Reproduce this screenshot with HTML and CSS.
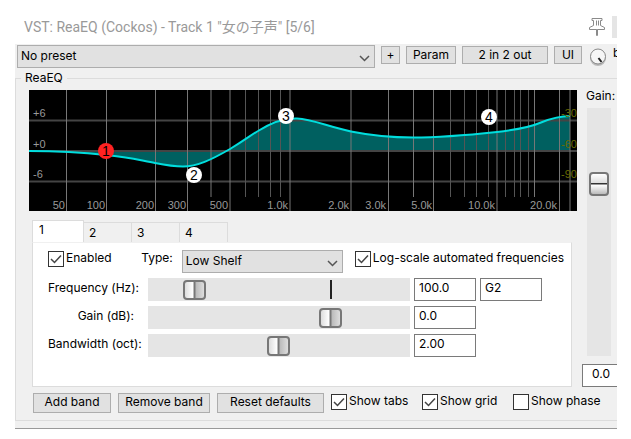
FILE: index.html
```html
<!DOCTYPE html>
<html lang="en">
<head>
    <meta charset="UTF-8">
    <meta name="viewport" content="width=device-width, initial-scale=1.0">
    <title>VST: ReaEQ</title>
    <link rel="stylesheet" href="styles.css">
</head>
<body>
    <div class="window">
        <header class="titlebar">
            <h1 class="title">VST: ReaEQ (Cockos) - Track 1 "女の子声" [5/6]</h1>
            <svg class="pin" width="18" height="20" viewBox="0 0 18 20" fill="#fff" stroke="#8a8a8a">
                <path d="M4 1.500H14V3.500H12.500V8.500L16.500 10.500V12.500H1.500V10.500L5.500 8.500V3.500H4Z"/>
                <path d="M8.500 12.500V18.500H9.500V12.500M8.500 3.500V8.500M10.500 3.500V8.500"/>
            </svg>
            <span class="title-edge"></span>
        </header>

        <div class="toolbar">
            <select class="select preset" aria-label="Preset">
                <option>No preset</option>
            </select>
            <button class="btn btn-plus" type="button">+</button>
            <button class="btn btn-param" type="button">Param</button>
            <button class="btn btn-io" type="button">2 in 2 out</button>
            <button class="btn btn-ui" type="button">UI</button>
            <svg class="knob" width="18" height="20" viewBox="0 0 18 20">
                <circle cx="9" cy="11" r="8" fill="#bbb"/>
                <circle cx="9" cy="9.500" r="7.500" fill="#f6f6f6" stroke="#888"/>
                <path d="M9.500 11L12.500 15" stroke="#222" stroke-width="2"/>
            </svg>
            <span class="bypass">b</span>
        </div>

        <fieldset class="group">
            <legend>ReaEQ</legend>
            <div class="editor">
                <svg class="graph" viewBox="0 0 548 121">
                    <rect width="548" height="121" fill="#000"/>
                    <path class="fill" d="M0 61C25 61 50 62 77 65C100 67 112 70.500 126 73C136 75 145 76.500 154 76.500C168 76.500 182 70 201 59C216 50 222 45 229 41C240 34 252 28 268 28.500C283 29 300 37 322 41.500C342 45.500 362 47.500 384 47.500C405 47.500 440 45 468 42C490 39.500 505 35.500 512 32.500C522 28.500 530 26 541 26V61Z"/>
                    <g class="grid">
                        <path d="M0 30.500H548M0 61H548M0 91.500H548"/>
                        <path class="short" d="M216.500 0V107M229.500 0V107M241.500 0V107M251.500 0V107M421.500 0V107M435.500 0V107M447.500 0V107M459.500 0V107M476.500 0V107M485.500 0V107M491.500 0V107M499.500 0V107"/>
                        <path class="major" d="M182 0V107M384.500 0V107M505.500 0V107M37.500 0V121M77.500 0V121M126.500 0V121M158.500 0V121M201 0V121M261 0V121M322 0V121M359.500 0V121M404.500 0V121M468 0V121M530.500 0V121M541 0V121"/>
                    </g>
                    <path class="curve" d="M0 61C25 61 50 62 77 65C100 67 112 70.500 126 73C136 75 145 76.500 154 76.500C168 76.500 182 70 201 59C216 50 222 45 229 41C240 34 252 28 268 28.500C283 29 300 37 322 41.500C342 45.500 362 47.500 384 47.500C405 47.500 440 45 468 42C490 39.500 505 35.500 512 32.500C522 28.500 530 26 541 26"/>
                    <g class="scale">
                        <text x="4" y="27">+6</text>
                        <text x="4" y="58">+0</text>
                        <text x="4" y="88">-6</text>
                        <g text-anchor="end">
                            <text x="36" y="119">50</text>
                            <text x="76" y="119">100</text>
                            <text x="125" y="119">200</text>
                            <text x="157" y="119">300</text>
                            <text x="199" y="119">500</text>
                            <text x="259" y="119">1.0k</text>
                            <text x="320" y="119">2.0k</text>
                            <text x="357" y="119">3.0k</text>
                            <text x="403" y="119">5.0k</text>
                            <text x="466" y="119">10.0k</text>
                            <text x="528" y="119">20.0k</text>
                        </g>
                    </g>
                    <g class="scale-db" text-anchor="end">
                        <text x="548" y="27">-30</text>
                        <text x="548" y="58">-60</text>
                        <text x="548" y="88">-90</text>
                    </g>
                    <g class="nodes">
                        <circle class="active" cx="77" cy="61" r="8"/>
                        <circle cx="165" cy="85" r="8"/>
                        <circle cx="257" cy="26" r="8"/>
                        <circle cx="460" cy="27" r="8"/>
                        <text x="77" y="66">1</text>
                        <text x="165" y="90">2</text>
                        <text x="257" y="31">3</text>
                        <text x="460" y="32">4</text>
                    </g>
                </svg>

                <div class="bands">
                    <div class="tabs" role="tablist">
                        <button class="tab active" type="button" role="tab" aria-selected="true">1</button>
                        <button class="tab" type="button" role="tab">2</button>
                        <button class="tab" type="button" role="tab">3</button>
                        <button class="tab" type="button" role="tab">4</button>
                    </div>
                    <div class="panel">
                        <div class="options">
                            <label class="check"><input type="checkbox" checked>Enabled</label>
                            <label class="type-label" for="type">Type:</label>
                            <select class="select type" id="type">
                                <option>Low Shelf</option>
                            </select>
                            <label class="check"><input type="checkbox" checked>Log-scale automated frequencies</label>
                        </div>
                        <div class="param">
                            <label for="freq">Frequency (Hz):</label>
                            <input class="slider ticked" type="range" id="freq" min="0" max="1000" value="147">
                            <input class="field" type="text" value="100.0" aria-label="Frequency value">
                            <input class="field" type="text" value="G2" aria-label="Note">
                        </div>
                        <div class="param">
                            <label for="gain">Gain (dB):</label>
                            <input class="slider" type="range" id="gain" min="0" max="1000" value="716">
                            <input class="field" type="text" value="0.0" aria-label="Gain value">
                        </div>
                        <div class="param">
                            <label for="bandwidth">Bandwidth (oct):</label>
                            <input class="slider" type="range" id="bandwidth" min="0" max="1000" value="498">
                            <input class="field" type="text" value="2.00" aria-label="Bandwidth value">
                        </div>
                    </div>
                </div>

                <div class="actions">
                    <button class="btn btn-add" type="button">Add band</button>
                    <button class="btn btn-remove" type="button">Remove band</button>
                    <button class="btn btn-reset" type="button">Reset defaults</button>
                    <label class="check"><input type="checkbox" checked>Show tabs</label>
                    <label class="check"><input type="checkbox" checked>Show grid</label>
                    <label class="check"><input type="checkbox">Show phase</label>
                </div>
            </div>

            <div class="output">
                <label for="output">Gain:</label>
                <input class="fader" type="range" id="output" min="0" max="1000" value="714">
                <input class="field output-value" type="text" value="0.0" aria-label="Output gain value">
            </div>
        </fieldset>
        <div class="footer"></div>
    </div>
</body>
</html>
```
FILE: styles.css
```css
* {
    box-sizing: border-box;
}
body {
    margin: 0;
    padding: 9px 14px 11px 15px;
    background: #fff;
    color: #000;
    font: 12px/16px Inter, "Noto Sans CJK JP", sans-serif;
}
button,
input,
select {
    margin: 0;
    font: inherit;
    color: inherit;
}
.window {
    overflow: hidden;
    background: #f0f0f0;
}

/* title bar */
.titlebar {
    display: flex;
    align-items: center;
    height: 35px;
    padding-left: 9px;
    background: #fff;
}
.title {
    flex: 1;
    margin: 0;
    font: 14px/20px Roboto, "Noto Sans CJK JP", sans-serif;
    color: #999;
}
.pin {
    margin-right: 6px;
}
.title-edge {
    width: 5px;
    height: 22px;
    background: #e5e5e5;
}

/* preset row */
.toolbar {
    display: flex;
    align-items: flex-start;
    gap: 6px;
    padding: 1px 0 0 2px;
}
.select {
    appearance: none;
    height: 23px;
    padding: 0 3px 2px;
    border: 1px solid #adadad;
    border-radius: 0;
    background: #e1e1e1 url("data:image/svg+xml,%3Csvg xmlns='http://www.w3.org/2000/svg' width='11' height='7'%3E%3Cpath d='M1 1L5.500 5.500L10 1' fill='none' stroke='%23555' stroke-width='1.500'/%3E%3C/svg%3E") no-repeat right 4px top 9px;
}
.preset {
    flex: 1;
    min-width: 0;
}
.btn {
    flex: none;
    height: 20px;
    padding: 0 0 2px;
    border: 1px solid #adadad;
    background: #e1e1e1;
    line-height: 16px;
}
.toolbar .btn {
    height: 18px;
    margin-top: 1px;
}
.btn-plus {
    width: 19px;
}
.btn-param {
    width: 50px;
}
.btn-io {
    width: 86px;
}
.btn-ui {
    width: 28px;
}
.knob {
    flex: none;
    margin: 2px 0 0 1px;
}
.bypass {
    width: 4px;
}

/* main group */
.group {
    display: grid;
    grid-template-columns: 1fr 35px;
    gap: 5px;
    margin: 2px 0 0;
    padding: 4px 0 7px 13px;
    border: 1px solid #dcdcdc;
    border-right: 0;
    min-width: 0;
}
.group legend {
    margin-left: -8px;
    padding: 0 4px;
}
.editor {
    min-width: 0;
}
.graph {
    display: block;
    width: 100%;
    font: 11px "Liberation Sans", sans-serif;
}
.grid path {
    fill: none;
    stroke: #444;
    stroke-width: 2;
}
.grid .short {
    stroke: #555;
    stroke-width: 1;
}
.grid .major {
    stroke: #777;
    stroke-width: 1;
}
.fill {
    fill: #006060;
}
.curve {
    fill: none;
    stroke: #00dede;
    stroke-width: 2;
}
.scale {
    fill: #999;
}
.scale-db {
    fill: #6b6b00;
}
.nodes {
    font-size: 14px;
    text-anchor: middle;
}
.nodes circle {
    fill: #fff;
}
.nodes .active {
    fill: #f22;
}

/* band tabs */
.bands {
    margin: 9px 5px 0 3px;
}
.tabs {
    display: flex;
    align-items: flex-end;
}
.tab {
    width: 48px;
    height: 20px;
    padding: 0 5px;
    border: 1px solid #dcdcdc;
    border-width: 1px 1px 0 0;
    background: #f0f0f0;
    text-align: left;
}
.tab.active {
    width: 52px;
    height: 22px;
    padding: 0 6px 4px;
    border-left-width: 1px;
    background: #fff;
}
.panel {
    padding: 7px 29px 29px 15px;
    border: 1px solid #dcdcdc;
    border-top-color: #f0f0f0;
    background: #fff;
}
.options {
    display: flex;
    align-items: flex-start;
    margin-right: -22px;
}
.check {
    display: flex;
    flex: none;
    align-items: flex-start;
    gap: 2px;
    white-space: nowrap;
}
.check input {
    appearance: none;
    flex: none;
    width: 16px;
    height: 16px;
    margin-top: 1px;
    border: 1px solid #333;
    background: #fff;
}
.check input:checked {
    background: #fff url("data:image/svg+xml,%3Csvg xmlns='http://www.w3.org/2000/svg' width='14' height='14'%3E%3Cpath d='M2 7L5.500 10.500L12 3.500' fill='none' stroke='%23444' stroke-width='1.500'/%3E%3C/svg%3E") no-repeat center;
}
.type-label {
    padding-right: 9px;
    margin-left: auto;
}
.type {
    flex: none;
    width: 161px;
    margin-right: 12px;
}
.param {
    display: grid;
    grid-template-columns: 86px 1fr 62px 62px;
    column-gap: 4px;
    align-items: center;
    margin-top: 5px;
}
.param label {
    padding-bottom: 3px;
    text-align: right;
    white-space: nowrap;
}
.slider {
    appearance: none;
    width: auto;
    min-width: 0;
    height: 23px;
    margin-left: 10px;
    background: #e5e5e5;
}
.ticked {
    background: linear-gradient(#222, #222) 70% 50% / 2px 19px no-repeat #e5e5e5;
}
.slider::-webkit-slider-thumb {
    appearance: none;
    width: 23px;
    height: 20px;
    border: 2px solid #777;
    border-radius: 4px;
    background: linear-gradient(to right, #ddd, #fff 8px, #777 9px, #777 10px, #bbb 11px, #ddd);
}
.field {
    width: 100%;
    height: 23px;
    padding: 0 4px 4px;
    border: 1px solid #7a7a7a;
    border-radius: 0;
    background: #fff;
}

/* bottom row */
.actions {
    display: flex;
    gap: 7px;
    padding: 6px 0 0 4px;
}
.btn-add {
    width: 78px;
}
.btn-remove {
    width: 92px;
}
.btn-reset {
    width: 107px;
}
.actions .check {
    width: 84px;
}

/* output gain */
.output {
    display: flex;
    flex-direction: column;
}
.output label {
    padding: 0 0 6px 4px;
    line-height: 12px;
}
.fader {
    appearance: none;
    writing-mode: vertical-lr;
    direction: rtl;
    width: 24px;
    height: 248px;
    margin: 0 0 8px 5px;
    background: #e5e5e5;
}
.fader::-webkit-slider-thumb {
    appearance: none;
    width: 20px;
    height: 24px;
    border: 2px solid #777;
    border-radius: 4px;
    background: linear-gradient(#fff, #ddd 9px, #333 9px, #333 10px, #fff 11px, #bbb);
}
.output-value {
    padding-left: 9px;
    border-right: 0;
}
.footer {
    height: 8px;
    border-bottom: 1px solid #999;
}
```
